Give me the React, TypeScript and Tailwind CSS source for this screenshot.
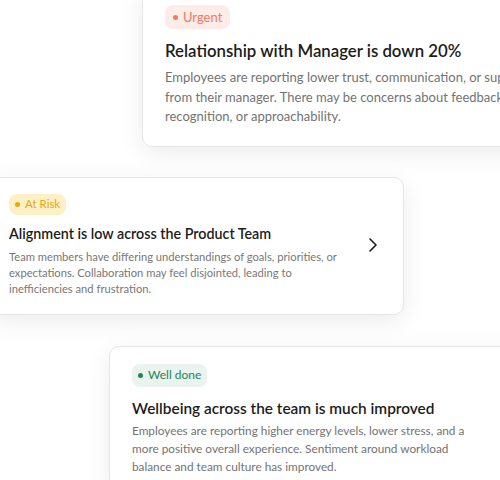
import { ChevronRight } from 'lucide-react';

type Tone = 'urgent' | 'risk' | 'good';

const badgeStyles: Record<Tone, string> = {
  urgent: 'bg-[#fdece8] text-[#f27b63]',
  risk: 'bg-[#fdf0c6] text-[#e9a80a]',
  good: 'bg-[#eaf3ee] text-[#23855a]',
};

const dotStyles: Record<Tone, string> = {
  urgent: 'bg-[#f27b63]',
  risk: 'bg-[#e9a80a]',
  good: 'bg-[#23855a]',
};

function Badge({ tone, label, size }: { tone: Tone; label: string; size: string }) {
  return (
    <div className={`flex w-fit items-center gap-[5px] rounded-lg leading-none ${badgeStyles[tone]} ${size}`}>
      <span className={`h-[5px] w-[5px] rounded-full ${dotStyles[tone]}`} />
      {label}
    </div>
  );
}

export default function App() {
  return (
    <div
      className="relative h-[480px] w-[500px] overflow-hidden bg-white"
      style={{ fontFamily: 'Lato, "Noto Sans", sans-serif' }}
    >
      <div className="flex flex-col">
        {/* Urgent */}
        <div className="ml-[142px] mt-[-13px] w-[420px] rounded-[10px] border border-[#e6e6e6] bg-white px-[22px] pb-[19px] pt-[17px] shadow-[0_6px_24px_rgba(0,0,0,0.08)]">
          <Badge tone="urgent" label="Urgent" size="h-[24px] px-[8px] text-[13px]" />
          <h2 className="mt-[10px] whitespace-nowrap text-[16.8px] font-semibold leading-[24px] text-[#1c1c1c]">
            Relationship with Manager is down 20%
          </h2>
          <p className="mt-[5px] whitespace-nowrap text-[13px] leading-[19.5px] text-[#737373]">
            Employees are reporting lower trust, communication, or support
            <br />
            from their manager. There may be concerns about feedback,
            <br />
            recognition, or approachability.
          </p>
        </div>

        {/* At Risk */}
        <div className="ml-[-10px] mt-[30px] flex w-[414px] items-center rounded-[10px] border border-[#e6e6e6] bg-white pb-[17px] pl-[18px] pr-[18px] pt-[16px] shadow-[0_6px_24px_rgba(0,0,0,0.08)]">
          <div className="flex-1">
            <Badge tone="risk" label="At Risk" size="h-[21px] px-[6px] text-[11.5px]" />
            <h2 className="mt-[8px] whitespace-nowrap text-[14.3px] font-semibold leading-[22px] text-[#1c1c1c]">
              Alignment is low across the Product Team
            </h2>
            <p className="mt-[4px] whitespace-nowrap text-[11.2px] leading-[16px] text-[#787878]">
              Team members have differing understandings of goals, priorities, or
              <br />
              expectations. Collaboration may feel disjointed, leading to
              <br />
              inefficiencies and frustration.
            </p>
          </div>
          <ChevronRight className="h-[24px] w-[24px] text-[#1c1c1c]" strokeWidth={1.6} />
        </div>

        {/* Well done */}
        <div className="ml-[109px] mt-[31px] w-[420px] rounded-[10px] border border-[#e6e6e6] bg-white px-[22px] pb-[19px] pt-[17px] shadow-[0_6px_24px_rgba(0,0,0,0.08)]">
          <Badge tone="good" label="Well done" size="h-[23px] px-[6px] text-[12px]" />
          <h2 className="mt-[9px] whitespace-nowrap text-[15.4px] font-semibold leading-[24px] text-[#1c1c1c]">
            Wellbeing across the team is much improved
          </h2>
          <p className="mt-[2px] whitespace-nowrap text-[11.8px] leading-[18px] text-[#737373]">
            Employees are reporting higher energy levels, lower stress, and a
            <br />
            more positive overall experience. Sentiment around workload
            <br />
            balance and team culture has improved.
          </p>
        </div>
      </div>
    </div>
  );
}
